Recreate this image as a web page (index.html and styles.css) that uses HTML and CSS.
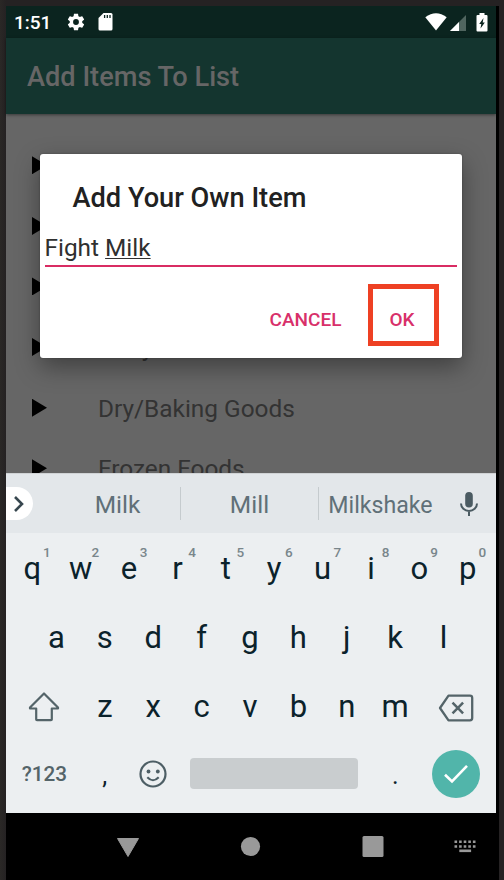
FILE: index.html
```html
<!DOCTYPE html>
<html lang="en">
<head>
<meta charset="utf-8">
<title>Add Items To List</title>
<link rel="stylesheet" href="styles.css">
</head>
<body>
<div class="device">
  <div class="screen">
    <header class="status">
      <span class="clock">1:51</span>
      <svg class="gear" width="20" height="20" viewBox="0 0 24 24"><path fill="#fff" d="M19.43 12.98c.04-.32.07-.64.07-.98s-.03-.66-.07-.98l2.11-1.65c.19-.15.24-.42.12-.64l-2-3.46c-.12-.22-.39-.3-.61-.22l-2.49 1c-.52-.4-1.08-.73-1.69-.98l-.38-2.65C14.46 2.18 14.25 2 14 2h-4c-.25 0-.46.18-.49.42l-.38 2.65c-.61.25-1.17.59-1.69.98l-2.49-1c-.23-.09-.49 0-.61.22l-2 3.46c-.13.22-.07.49.12.64l2.11 1.65c-.04.32-.07.65-.07.98s.03.66.07.98l-2.11 1.65c-.19.15-.24.42-.12.64l2 3.46c.12.22.39.3.61.22l2.49-1c.52.4 1.08.73 1.69.98l.38 2.65c.03.24.24.42.49.42h4c.25 0 .46-.18.49-.42l.38-2.65c.61-.25 1.17-.59 1.69-.98l2.49 1c.23.09.49 0 .61-.22l2-3.46c.12-.22.07-.49-.12-.64zM12 15.5a3.5 3.5 0 1 1 0-7 3.5 3.5 0 0 1 0 7z"/></svg>
      <svg class="card" width="15" height="18" viewBox="0 0 15 18"><path fill="#fff" d="M5.500 0H13q1.500 0 1.500 1.500V16q0 1.500-1.500 1.500H2Q.5 17.500.5 16V5z"/><path stroke="#0b241f" stroke-width="1.300" d="M6.600 2v3M9.300 2v3M12 2v3"/></svg>
      <span class="spacer"></span>
      <svg class="wifi" width="22" height="18" viewBox="0 0 22 18"><path fill="#fff" d="M.3 4.200Q11-3.800 21.700 4.200L11 17.500z"/></svg>
      <svg class="signal" width="16" height="16" viewBox="0 0 16 16"><path fill="#50655f" d="M16 0v16H0z"/><path fill="#fff" d="M9 7v9H0z"/></svg>
      <svg class="battery" width="12" height="19" viewBox="0 0 12 19"><path fill="#fff" d="M3.500 0h5v2H10.500Q11.500 2 11.500 3V17.500Q11.500 18.500 10.500 18.500H1.500Q.5 18.500 .5 17.500V3Q.5 2 1.500 2h2z"/><path fill="#0b241f" d="M7.500 5L3.200 11H5.300L4.500 15.500L8.800 9.500H6.700z"/></svg>
    </header>
    <h1 class="appbar">Add Items To List</h1>
    <main class="content">
      <ul class="list">
        <li><i class="arrow"></i></li>
        <li><i class="arrow"></i></li>
        <li><i class="arrow"></i></li>
        <li><i class="arrow"></i>Dairy</li>
        <li><i class="arrow"></i>Dry/Baking Goods</li>
        <li><i class="arrow"></i>Frozen Foods</li>
      </ul>
      <section class="dialog">
        <h2>Add Your Own Item</h2>
        <div class="field">Fight <span class="composing">Milk</span></div>
        <div class="actions"><button class="cancel">CANCEL</button><button class="ok">OK</button></div>
      </section>
    </main>
    <section class="keyboard">
      <div class="suggest">
        <span class="expand"><svg width="12" height="18" viewBox="0 0 12 18"><path fill="none" stroke="#37474f" stroke-width="2.600" d="M2 2l7 7-7 7"/></svg></span>
        <span class="word w1">Milk</span><span class="word w2">Mill</span><span class="word w3">Milkshake</span>
        <span class="mic"><svg width="20" height="26" viewBox="0 0 20 26"><rect x="6.200" y="1" width="7.600" height="15.500" rx="3.800" fill="#4b5b62"/><path fill="none" stroke="#4b5b62" stroke-width="2" d="M2 12.500a8 7.500 0 0 0 16 0M10 20v5"/></svg></span>
      </div>
      <div class="row">
        <span class="key">q<sup>1</sup></span><span class="key">w<sup>2</sup></span><span class="key">e<sup>3</sup></span><span class="key">r<sup>4</sup></span><span class="key">t<sup>5</sup></span><span class="key">y<sup>6</sup></span><span class="key">u<sup>7</sup></span><span class="key">i<sup>8</sup></span><span class="key">o<sup>9</sup></span><span class="key">p<sup>0</sup></span>
      </div>
      <div class="row">
        <span class="key">a</span><span class="key">s</span><span class="key">d</span><span class="key">f</span><span class="key">g</span><span class="key">h</span><span class="key">j</span><span class="key">k</span><span class="key">l</span>
      </div>
      <div class="row">
        <span class="key wide"><svg width="32" height="32" viewBox="0 0 32 32"><path fill="none" stroke="#546469" stroke-width="2.200" stroke-linejoin="round" d="M16 2.500L2 16.500V17.500H8.200V28.500Q8.200 29.200 9 29.200H23Q23.800 29.200 23.800 28.500V17.500H30V16.500z"/></svg></span>
        <span class="key">z</span><span class="key">x</span><span class="key">c</span><span class="key">v</span><span class="key">b</span><span class="key">n</span><span class="key">m</span>
        <span class="key wide back"><svg width="36" height="28" viewBox="0 0 36 28"><path fill="none" stroke="#546469" stroke-width="2.300" stroke-linejoin="round" d="M10.500 1.700H32Q34.200 1.700 34.200 4V24Q34.200 26.300 32 26.300H10.500L2 14z"/><path stroke="#546469" stroke-width="2.500" d="M14.500 8.700l10.600 10.600M25.100 8.700L14.500 19.300"/></svg></span>
      </div>
      <div class="row bottom">
        <span class="key wide symbols">?123</span>
        <span class="key punct">,</span>
        <span class="key"><svg width="28" height="28" viewBox="0 0 28 28"><circle cx="14" cy="14" r="12.500" fill="none" stroke="#4d5e65" stroke-width="2.200"/><circle cx="9.500" cy="11.500" r="1.900" fill="#4d5e65"/><circle cx="18.800" cy="11.500" r="1.900" fill="#4d5e65"/><path fill="none" stroke="#4d5e65" stroke-width="2.100" d="M8.300 17.200q5.700 6 11.400 0"/></svg></span>
        <span class="space"></span>
        <span class="key punct">.</span>
        <span class="key wide"><span class="done"><svg width="26" height="20" viewBox="0 0 26 20"><path fill="none" stroke="#fff" stroke-width="2.600" d="M2 10.800L9 17.500L24 1.800"/></svg></span></span>
      </div>
    </section>
    <nav class="nav">
      <svg width="490" height="67" viewBox="0 0 490 67" fill="#999">
        <path stroke="#999" stroke-linejoin="round" d="M111.500 25.500h21L122 43.500z"/>
        <circle cx="244.500" cy="33.500" r="9.600"/>
        <rect x="356.500" y="23" width="21" height="21" rx="1.500"/>
        <path fill="none" stroke="#999" stroke-width="2.600" stroke-dasharray="2.600 2" d="M448.500 28.700h21M448.500 33.500h21"/>
        <rect x="453.300" y="36.500" width="11.800" height="2.600"/>
      </svg>
    </nav>
  </div>
</div>
</body>
</html>
```
FILE: styles.css
```css
* { box-sizing: border-box; }
body { margin: 0; width: 504px; height: 880px; overflow: hidden; background: #252223; font-family: Roboto, sans-serif; }
.device { height: 880px; padding: 6px 8px 0 6px; background: linear-gradient(90deg, #2a2826, #252223 6px); }
.screen { width: 490px; height: 874px; display: flex; flex-direction: column; background: #000; box-shadow: 3px 0 0 #000; }
.status { height: 32px; flex: none; display: flex; align-items: center; background: #0b241f; color: #fff; padding: 0 8px 0 8px; }
.clock { font-size: 19px; font-weight: 500; padding-top: 1px; }
.gear { margin-left: 15px; }
.card { margin-left: 12px; }
.spacer { flex: 1; }
.signal { margin-left: 3px; margin-top: 2px; }
.battery { margin-left: 10px; }
.appbar { height: 76px; flex: none; margin: 0; padding-left: 21px; background: #14352f; color: #666; font-size: 27.200px; font-weight: 500; line-height: 78px; z-index: 1; box-shadow: 0 1px 3px rgba(0,0,0,.45); }
.content { height: 359px; flex: none; position: relative; overflow: hidden; background: #666; }
.list { list-style: none; margin: 0; padding: 21px 0 0 26px; }
.list li { height: 60.600px; display: flex; align-items: center; color: #333; font-size: 24.400px; padding-top: 1px; }
.arrow { width: 15px; height: 18px; margin: -1px 51px 0 0; background: #000; clip-path: polygon(0 0, 100% 50%, 0 100%); }
.dialog { position: absolute; left: 33.500px; top: 39.500px; width: 422px; height: 204px; padding: 0 5px; border-radius: 3px; background: #fff; box-shadow: 0 9px 24px rgba(0,0,0,.38), 0 0 2px rgba(0,0,0,.3); }
.dialog h2 { margin: 0; padding: 26px 0 0 28px; color: #212121; font-size: 27.200px; font-weight: 500; line-height: 37px; }
.field { height: 50.500px; padding-top: 15px; border-bottom: 2.500px solid #d92c63; color: #303030; font-size: 24.400px; line-height: 32px; }
.composing { text-decoration: underline; text-decoration-thickness: 1px; text-underline-offset: 2px; }
.actions { display: flex; justify-content: flex-end; align-items: center; padding: 17px 18px 0 0; }
button { border: 0; padding: 0; background: none; font: 500 19px Roboto, sans-serif; color: #d8306a; }
.cancel { margin-right: 26px; padding-top: 9px; }
.ok { width: 71px; height: 62px; border: 5px solid #ee4023; padding: 9px 2px 0 0; }
.keyboard { height: 340px; flex: none; background: #eceff1; }
.suggest { height: 60px; display: flex; align-items: center; background: #e3e7ea; border-top: 1px solid #d0d3d5; }
.expand { width: 27px; height: 33px; border-radius: 0 17px 17px 0; background: #fff; display: flex; align-items: center; padding-left: 7px; }
.word { height: 33px; line-height: 35px; text-align: center; color: #607078; font-size: 24.500px; }
.w1 { width: 147px; padding-left: 22px; }
.w2 { width: 139px; border-left: 1px solid #c5cbce; border-right: 1px solid #c5cbce; }
.w3 { width: 123px; transform: scaleX(.945); }
.mic { flex: 1; display: flex; justify-content: center; }
.row { height: 69px; display: flex; justify-content: center; align-items: center; padding-right: 2px; }
.key { width: 48.400px; height: 69px; flex: none; position: relative; display: flex; align-items: center; justify-content: center; color: #0b222b; font-size: 31px; padding-top: 2px; }
.key sup { position: absolute; left: 35px; top: 12px; color: #79868b; font-size: 13.500px; font-weight: 500; line-height: 14px; }
.wide { width: 72.600px; }
.back { padding-top: 5px; }
.bottom .key { padding-top: 0; }
.bottom { height: 67px; }
.symbols { color: #546469; font-size: 20.700px; font-weight: 500; }
.bottom .punct { font-size: 25px; padding-top: 4px; }
.space { width: 168.400px; height: 31px; margin: 0 12.600px; border-radius: 4px; background: #c9cdcf; }
.done { width: 48px; height: 48px; border-radius: 50%; background: #51b5aa; display: flex; align-items: center; justify-content: center; }
.nav { height: 67px; flex: none; background: #000; }
.nav svg { display: block; }
```
